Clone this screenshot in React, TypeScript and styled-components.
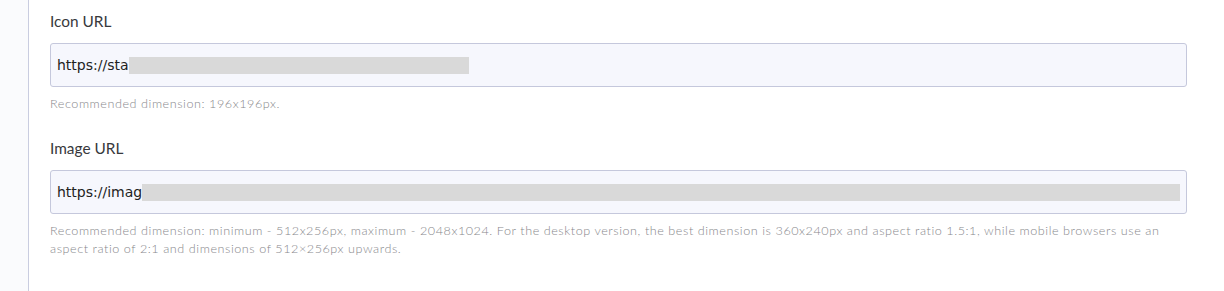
import styled, { createGlobalStyle } from "styled-components"

const GlobalStyle = createGlobalStyle`
  body {
    margin: 0;
    background: #ffffff;
  }
`

const Page = styled.div`
  display: flex;
  min-height: 291px;
  background: #fafbfd;
`

const Content = styled.div`
  flex: 1;
  margin-left: 28px;
  border-left: 1px solid #c9cde0;
  background: #ffffff;
  padding: 12px 38px 0 21px;
  display: flex;
  flex-direction: column;
  gap: 26px;
`

const Field = styled.div`
  display: flex;
  flex-direction: column;
`

const Label = styled.label`
  font-family: Lato, "Noto Sans", sans-serif;
  font-size: 15.4px;
  color: #38393c;
  line-height: 18px;
  margin-bottom: 13px;
`

const InputBox = styled.div`
  height: 42px;
  border: 1px solid #c5c8dc;
  border-radius: 3px;
  background: #f6f7fd;
  display: flex;
  align-items: center;
  padding: 0 6px;
  font-family: "DejaVu Sans", sans-serif;
  font-size: 14px;
  color: #222222;
`

const Redacted = styled.span<{ $width: number }>`
  display: inline-block;
  width: ${(p) => p.$width}px;
  height: 17px;
  background: #d9d9d9;
`

const Hint = styled.p`
  margin: 8px 0 0;
  font-family: Lato, "Noto Sans", sans-serif;
  font-weight: 300;
  font-size: 12.6px;
  letter-spacing: 0.56px;
  line-height: 18px;
  color: #88888c;
`

export default function App() {
  return (
    <>
      <GlobalStyle />
      <Page>
        <Content>
          <Field>
            <Label>Icon URL</Label>
            <InputBox>
              https://sta
              <Redacted $width={340} />
            </InputBox>
            <Hint>Recommended dimension: 196x196px.</Hint>
          </Field>
          <Field>
            <Label>Image URL</Label>
            <InputBox>
              https://imag
              <Redacted $width={1038} />
            </InputBox>
            <Hint>
              Recommended dimension: minimum - 512x256px, maximum - 2048x1024. For the desktop version, the best
              dimension is 360x240px and aspect ratio 1.5:1, while mobile browsers use an aspect ratio of 2:1 and
              dimensions of 512×256px upwards.
            </Hint>
          </Field>
        </Content>
      </Page>
    </>
  )
}
